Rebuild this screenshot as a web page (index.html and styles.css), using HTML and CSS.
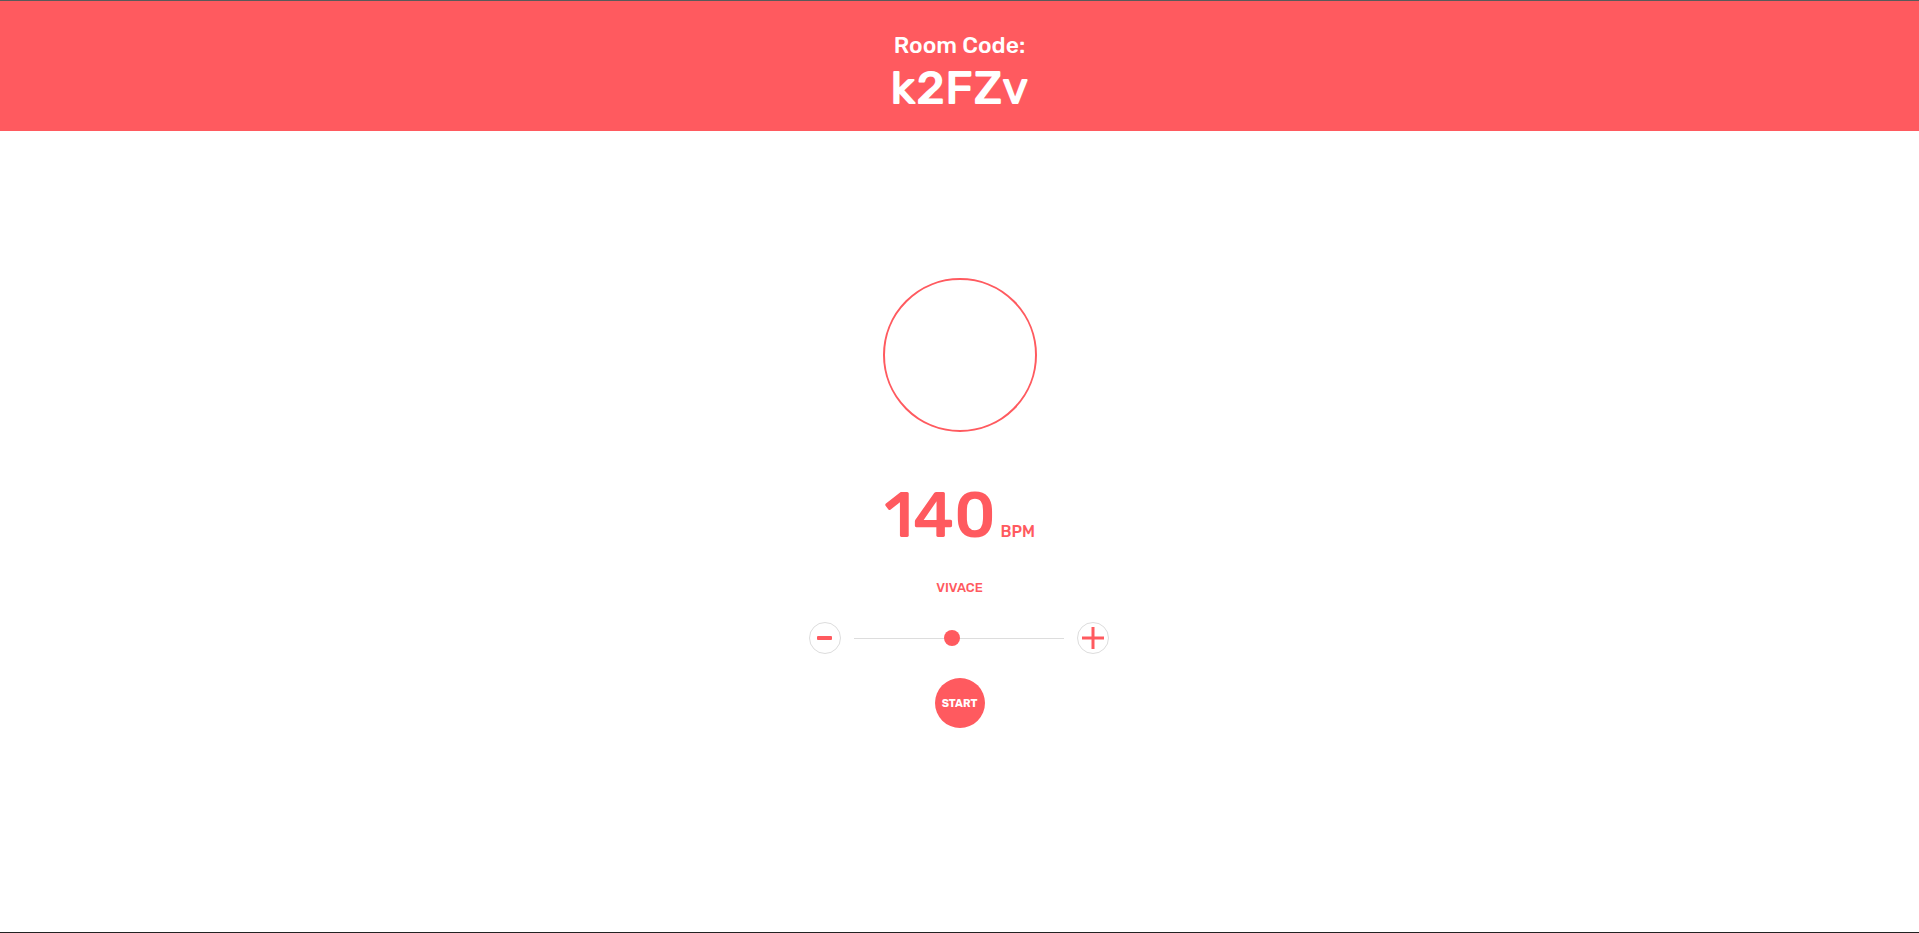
FILE: index.html
```html
<!DOCTYPE html>
<html>
<head>
<meta charset="utf-8">
<link rel="stylesheet" href="styles.css">
</head>
<body>
<div class="page">
  <header class="header">
    <div class="room-label">Room Code:</div>
    <div class="room-code">k2FZv</div>
  </header>
  <main class="main">
    <div class="beat-circle"></div>
    <div class="tempo">
      <span class="bpm-value">140</span>
      <span class="bpm-unit">BPM</span>
    </div>
    <div class="tempo-name">VIVACE</div>
    <div class="slider-row">
      <button class="round-btn minus" aria-label="decrease">
        <svg width="15" height="4" viewBox="0 0 15 4"><rect x="0" y="0" width="15" height="4" rx="1" fill="#ff5a5f"/></svg>
      </button>
      <div class="track">
        <div class="thumb"></div>
      </div>
      <button class="round-btn plus" aria-label="increase">
        <svg width="22" height="22" viewBox="0 0 22 22"><rect x="0" y="9.5" width="22" height="3" fill="#ff5a5f"/><rect x="9.5" y="0" width="3" height="22" fill="#ff5a5f"/></svg>
      </button>
    </div>
    <button class="start-btn">START</button>
  </main>
  <div class="bottom-bar"></div>
</div>
</body>
</html>
```

FILE: styles.css
```css
html, body {
  margin: 0;
  padding: 0;
  height: 100%;
}
body {
  font-family: "Rubik", "Inter", "Noto Sans", sans-serif;
  background: #ffffff;
}
.page {
  display: flex;
  flex-direction: column;
  height: 100vh;
}
.header {
  border-top: 1px solid #5a5a5a;
  background: #ff5a5f;
  height: 130px;
  color: #ffffff;
  display: flex;
  flex-direction: column;
  align-items: center;
}
.room-label {
  font-size: 23px;
  font-weight: 500;
  line-height: 26px;
  margin-top: 31px;
}
.room-code {
  font-size: 47px;
  font-weight: 500;
  line-height: 54px;
  margin-top: 3px;
}
.main {
  flex: 1;
  display: flex;
  flex-direction: column;
  align-items: center;
  padding-top: 147px;
}
.beat-circle {
  width: 150px;
  height: 150px;
  border: 2px solid #ff5a5f;
  border-radius: 50%;
}
.tempo {
  display: flex;
  align-items: baseline;
  color: #ff5a5f;
  margin-top: 49px;
}
.bpm-value {
  font-size: 63px;
  font-weight: 500;
  line-height: 70px;
}
.bpm-unit {
  font-size: 16px;
  font-weight: 500;
  margin-left: 5px;
}
.tempo-name {
  color: #ff5a5f;
  font-size: 13px;
  font-weight: 500;
  margin-top: 29px;
  line-height: 16px;
}
.slider-row {
  display: flex;
  align-items: center;
  gap: 13px;
  margin-top: 26px;
  margin-left: -2px;
}
.round-btn {
  width: 32px;
  height: 32px;
  border: 1px solid #dddddd;
  border-radius: 50%;
  background: #ffffff;
  padding: 0;
  display: flex;
  align-items: center;
  justify-content: center;
}
.track {
  position: relative;
  width: 210px;
  height: 1px;
  background: #dddddd;
}
.thumb {
  position: absolute;
  left: 90px;
  top: -8px;
  width: 16px;
  height: 16px;
  border-radius: 50%;
  background: #ff5a5f;
}
.start-btn {
  margin-top: 24px;
  width: 50px;
  height: 50px;
  border-radius: 50%;
  border: none;
  background: #ff5a5f;
  color: #ffffff;
  font-family: inherit;
  font-size: 11px;
  font-weight: 700;
  padding: 0;
}
.bottom-bar {
  height: 1px;
  background: #222222;
}
```
